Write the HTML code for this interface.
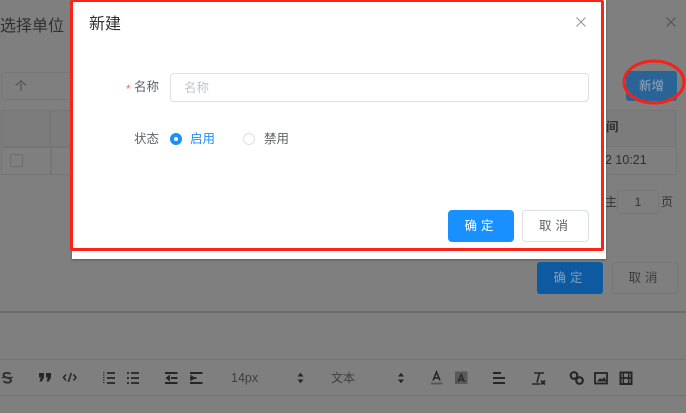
<!DOCTYPE html>
<html lang="zh">
<head>
<meta charset="utf-8">
<title>新建</title>
<style>
html,body{margin:0;padding:0;}
body{width:686px;height:413px;overflow:hidden;position:relative;background:#7f7f7f;font-family:"Liberation Sans","Noto Sans CJK SC",sans-serif;}
.a{position:absolute;box-sizing:border-box;white-space:nowrap;}
.cell{border:1px solid #757678;}
</style>
</head>
<body>
<!-- background dialog -->
<div class="a" style="left:0;top:15px;font-size:16px;line-height:23px;color:#303030;">选择单位</div>
<svg class="a" style="left:664px;top:15px" width="14" height="14" viewBox="0 0 14 14"><path d="M2.500 2.500l9 9M11.500 2.500l-9 9" stroke="#505050" stroke-width="1" fill="none"/></svg>
<div class="a" style="left:1px;top:72px;width:90px;height:28px;border:1px solid #767779;border-radius:4px;"></div>
<div class="a" style="left:15px;top:77px;font-size:12px;line-height:18px;color:#4a4a4a;">个</div>
<div class="a" style="left:626px;top:71px;width:51px;height:30px;background:#2a6496;border-radius:3px;color:#94a8ba;font-size:12.500px;line-height:31px;text-align:center;">新增</div>
<div class="a cell" style="left:1px;top:110px;width:49px;height:37px;background:#7c7c7c;"></div>
<div class="a cell" style="left:50px;top:110px;width:40px;height:37px;background:#7c7c7c;"></div>
<div class="a cell" style="left:1px;top:147px;width:50px;height:28px;"></div>
<div class="a cell" style="left:51px;top:147px;width:40px;height:28px;"></div>
<div class="a" style="left:10px;top:154px;width:13px;height:13px;border:1px solid #6e6e6e;border-radius:2px;"></div>
<div class="a cell" style="left:600px;top:110px;width:76px;height:37px;background:#7c7c7c;"></div>
<div class="a cell" style="left:600px;top:146px;width:77px;height:29px;"></div>
<div class="a" style="left:606px;top:118px;font-size:12.500px;line-height:18px;font-weight:bold;color:#303030;">间</div>
<div class="a" style="left:605px;top:151px;font-size:12.500px;line-height:18px;color:#303030;">2 10:21</div>
<div class="a" style="left:605px;top:194px;font-size:12px;line-height:16px;color:#333;">主</div>
<div class="a" style="left:617px;top:190px;width:42px;height:24px;border:1px solid #767779;border-radius:4px;font-size:12px;line-height:22px;text-align:center;color:#333;">1</div>
<div class="a" style="left:661px;top:194px;font-size:12px;line-height:16px;color:#333;">页</div>
<div class="a" style="left:537px;top:262px;width:66px;height:32px;background:#0d5aa0;border-radius:3px;color:#7f9fbe;font-size:12.500px;line-height:32px;text-align:center;letter-spacing:4px;">确定</div>
<div class="a" style="left:612px;top:262px;width:66px;height:32px;border:1px solid #767779;border-radius:3px;color:#3c3c3c;font-size:12.500px;line-height:31px;text-align:center;letter-spacing:4px;">取消</div>
<!-- editor -->
<div class="a" style="left:0;top:311px;width:686px;height:2px;background:#6c6c6c;"></div>
<div class="a" style="left:0;top:359px;width:686px;height:1px;background:#747474;"></div>
<div class="a" style="left:0;top:395px;width:686px;height:1px;background:#747474;"></div>
<svg class="a" style="left:0;top:360px" width="686" height="36" viewBox="0 0 686 36" fill="none" stroke="#262626" stroke-width="1.900">
  <path d="M10.500 14c-1.500-1.500-7-1.700-7 1 0 3 7.500 2.500 7.500 5.500 0 2.800-5.500 2.800-7.500.5" stroke="#303030"/>
  <path d="M1.500 17.500h11.500" stroke-width="1.200" stroke="#303030"/>
  <path d="M39 13h5v4.500l-2.200 4h-2.300l1.300-4h-1.800zM46 13h5v4.500l-2.200 4h-2.300l1.300-4h-1.800z" fill="#262626" stroke="none"/>
  <path d="M66 14.500l-2.500 3 2.500 3M73.500 14.500l2.500 3-2.500 3M71.300 13l-3 9" stroke-width="1.500"/>
  <path d="M107 13h8M107 18h8M107 23h8" stroke-width="1.800"/>
  <path d="M103 12.500h1.500M103 15h1.500M103 17.500h1.500M103 20h1.500M103 22.500h1.500" stroke-width="1.100"/>
  <path d="M131 13h8M131 18h8M131 23h8M127 13h2M127 18h2M127 23h2" stroke-width="1.800"/>
  <path d="M165 13h12.500M171 18h6.500M165 23h12.500"/>
  <path d="M170 14.500l-4.500 3.500 4.500 3.500z" fill="#262626" stroke="none"/>
  <path d="M190 13h12.500M190 18h6.500M190 23h12.500"/>
  <path d="M190.500 14.500l4.500 3.500-4.500 3.500z" fill="#262626" stroke="none"/>
  <path d="M300.500 16.500h-3l3-3.800 3 3.800zM297.500 19.500h6l-3 3.800z" fill="#262626" stroke="none"/>
  <path d="M401 16.500h-3l3-3.800 3 3.800zM398 19.500h6l-3 3.800z" fill="#262626" stroke="none"/>
  <path d="M433 20.500l3.500-8.500 3.500 8.500M434.300 18h4.500" stroke-width="1.600"/>
  <path d="M431 23.500h11.500" stroke="#555"/>
  <rect x="455" y="11.500" width="12.500" height="12.500" fill="#585858" stroke="none"/>
  <path d="M458 22l3.200-7.500 3.200 7.500M459.200 19.700h4" stroke-width="1.300"/>
  <path d="M493 13h8M493 18h12M493 23h12" stroke-width="2"/>
  <path d="M534 13h10M539.500 13l-2.500 9.500M532 24h8" stroke-width="1.600"/>
  <path d="M541 20.500l4 4M545 20.500l-4 4" stroke-width="1.800"/>
  <circle cx="574" cy="15.500" r="3.300" stroke-width="2.100"/><circle cx="579.500" cy="20.500" r="3.300" stroke-width="2.100"/>
  <rect x="595" y="13" width="12" height="10.500" stroke-width="1.800"/>
  <path d="M597 21.500l3-3.500 2 1.500 2-2.500 2 3v1.500z" fill="#262626" stroke="none"/>
  <rect x="620.500" y="12.500" width="11" height="11.500" stroke-width="2"/>
  <path d="M620 18h12M623.500 12v12M628.500 12v12" stroke-width="1.800"/>
  <path d="M624 15h4M624 21h4" stroke="#7f7f7f" stroke-width="3"/>
</svg>
<div class="a" style="left:231px;top:370px;font-size:12.500px;line-height:16px;color:#3e3e3e;">14px</div>
<div class="a" style="left:331px;top:370px;font-size:12px;line-height:16px;color:#3e3e3e;">文本</div>
<!-- modal -->
<div class="a" style="left:72px;top:0;width:534px;height:259px;background:#fff;box-shadow:0 1px 2px rgba(0,0,0,.3);"></div>
<div class="a" style="left:70px;top:0;width:534px;height:251px;border:3px solid #fb2218;border-top-width:2px;border-radius:2px;"></div>
<div class="a" style="left:89px;top:14px;font-size:16px;line-height:22px;color:#303133;">新建</div>
<svg class="a" style="left:575px;top:16px" width="12" height="12" viewBox="0 0 12 12"><path d="M1.500 1.500l9 9M10.500 1.500l-9 9" stroke="#909399" stroke-width="1" fill="none"/></svg>
<div class="a" style="left:126px;top:81px;font-size:12px;line-height:16px;color:#f56c6c;">*</div>
<div class="a" style="left:134px;top:79px;font-size:12.500px;line-height:17px;color:#606266;">名称</div>
<div class="a" style="left:170px;top:73px;width:419px;height:29px;border:1px solid #dcdfe6;border-radius:4px;background:#fff;"></div>
<div class="a" style="left:184px;top:80px;font-size:12.500px;line-height:17px;color:#c0c4cc;">名称</div>
<div class="a" style="left:134px;top:131px;font-size:12.500px;line-height:17px;color:#606266;">状态</div>
<div class="a" style="left:170px;top:133px;width:12px;height:12px;border-radius:50%;border:4px solid #1890ff;background:#fff;"></div>
<div class="a" style="left:190px;top:131px;font-size:12.500px;line-height:17px;color:#1890ff;">启用</div>
<div class="a" style="left:243px;top:133px;width:12px;height:12px;border-radius:50%;border:1px solid #dcdfe6;background:#fff;"></div>
<div class="a" style="left:264px;top:131px;font-size:12.500px;line-height:17px;color:#606266;">禁用</div>
<div class="a" style="left:448px;top:210px;width:66px;height:32px;background:#1890ff;border-radius:4px;color:#fff;font-size:12.500px;line-height:32px;text-align:center;letter-spacing:4px;">确定</div>
<div class="a" style="left:522px;top:210px;width:67px;height:32px;background:#fff;border:1px solid #dcdfe6;border-radius:4px;color:#606266;font-size:12.500px;line-height:31px;text-align:center;letter-spacing:4px;">取消</div>
<!-- annotation -->
<svg class="a" style="left:618px;top:56px" width="68" height="52" viewBox="0 0 68 52"><ellipse cx="36" cy="26" rx="30" ry="21" fill="none" stroke="#f5211a" stroke-width="3"/></svg>
</body>
</html>
